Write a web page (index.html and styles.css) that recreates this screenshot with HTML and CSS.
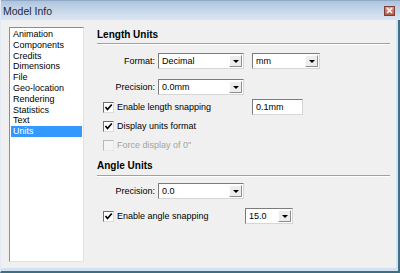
FILE: index.html
```html
<!DOCTYPE html>
<html>
<head>
<meta charset="utf-8">
<link rel="stylesheet" href="styles.css">
</head>
<body>
<div class="window">
  <div class="titlebar">
    <span class="title">Model Info</span>
    <span class="close"><svg width="7" height="7" viewBox="0 0 7 7"><path d="M1 1 L6 6 M6 1 L1 6" stroke="#fff" stroke-width="1.6"/></svg></span>
  </div>
  <div class="client">
    <ul class="list">
      <li>Animation</li>
      <li>Components</li>
      <li>Credits</li>
      <li>Dimensions</li>
      <li>File</li>
      <li>Geo-location</li>
      <li>Rendering</li>
      <li>Statistics</li>
      <li>Text</li>
      <li class="sel">Units</li>
    </ul>
    <div class="panel">
      <div class="heading">Length Units</div>
      <div class="row row-format">
        <span class="lbl">Format:</span>
        <div class="select w-main"><span class="val">Decimal</span><i class="btn"></i></div>
        <div class="select w-unit"><span class="val">mm</span><i class="btn"></i></div>
      </div>
      <div class="row row-prec">
        <span class="lbl">Precision:</span>
        <div class="select w-main"><span class="val">0.0mm</span><i class="btn"></i></div>
      </div>
      <div class="row row-snap">
        <label class="check-label snap-len"><span class="cb on"><svg width="9" height="9" viewBox="0 0 9 9"><path d="M1.5 4 L3.5 6.5 L7.8 1.5" fill="none" stroke="#000" stroke-width="1.7"/></svg></span>Enable length snapping</label>
        <div class="input">0.1mm</div>
      </div>
      <div class="row row-disp">
        <label class="check-label"><span class="cb on"><svg width="9" height="9" viewBox="0 0 9 9"><path d="M1.5 4 L3.5 6.5 L7.8 1.5" fill="none" stroke="#000" stroke-width="1.7"/></svg></span>Display units format</label>
      </div>
      <div class="row row-force">
        <label class="check-label disabled"><span class="cb off"></span>Force display of 0"</label>
      </div>
      <div class="heading heading-angle">Angle Units</div>
      <div class="row row-aprec">
        <span class="lbl">Precision:</span>
        <div class="select w-main"><span class="val">0.0</span><i class="btn"></i></div>
      </div>
      <div class="row row-asnap">
        <label class="check-label snap-ang"><span class="cb on"><svg width="9" height="9" viewBox="0 0 9 9"><path d="M1.5 4 L3.5 6.5 L7.8 1.5" fill="none" stroke="#000" stroke-width="1.7"/></svg></span>Enable angle snapping</label>
        <div class="select w-ang"><span class="val">15.0</span><i class="btn"></i></div>
      </div>
    </div>
  </div>
</div>
</body>
</html>
```
FILE: styles.css
```css
html, body {
  margin: 0;
  padding: 0;
}
body {
  width: 400px;
  height: 273px;
  overflow: hidden;
  font-family: "Liberation Sans", Arial, sans-serif;
  font-size: 9px;
  color: #000;
}
.window {
  width: 400px;
  height: 273px;
  box-sizing: border-box;
  display: flex;
  flex-direction: column;
  background: #d3e2f2;
  border-left: 1px solid #e2ebf5;
  border-right: 2px solid #3f6e80;
  border-bottom: 2px solid #3f6e80;
}
.titlebar {
  height: 20px;
  flex: none;
  display: flex;
  align-items: center;
  justify-content: space-between;
  padding: 0 3px 0 2px;
  margin-right: -2px;
  background: linear-gradient(#aec4dd, #c9d9eb 55%, #dae6f3);
  border-top: 1px solid #8fa9c6;
  box-sizing: border-box;
}
.title {
  font-size: 10.5px;
  color: #1d2a3a;
}
.close {
  width: 11px;
  height: 10px;
  box-sizing: border-box;
  border: 1px solid #7d3f35;
  background: linear-gradient(#d99a8c, #b65a48);
  display: flex;
  align-items: center;
  justify-content: center;
  margin-right: 2px;
}
.client {
  flex: 1;
  margin: 0 2px 3px 0;
  background: #f0f0f0;
  display: flex;
  align-items: flex-start;
}
.list {
  list-style: none;
  margin: 7px 0 0 8px;
  padding: 1px 1px 0 1px;
  width: 75px;
  height: 235px;
  box-sizing: border-box;
  background: #fff;
  border: 1px solid;
  border-color: #8c8c8c #e3e3e3 #e3e3e3 #8c8c8c;
}
.list li {
  line-height: 10.8px;
  height: 10.8px;
  padding-left: 2px;
  white-space: nowrap;
}
.list li.sel {
  background: #3399ff;
  color: #fff;
}
.panel {
  margin-left: 13px;
  width: 293px;
  padding-top: 8px;
}
.heading {
  font-weight: bold;
  font-size: 10px;
  line-height: 13px;
  padding-bottom: 2px;
  border-bottom: 1px solid #a0a0a0;
  box-shadow: 0 1px 0 #fff;
}
.heading-angle {
  margin-top: 7px;
  padding-bottom: 3px;
}
.row {
  display: flex;
  align-items: center;
}
.row-format { margin-top: 9px; }
.row-prec { margin-top: 10px; }
.row-snap { margin-top: 4px; }
.row-disp { margin-top: 4px; height: 14px; }
.row-force { margin-top: 5px; height: 14px; }
.row-aprec { margin-top: 7px; }
.row-asnap { margin-top: 9px; }
.lbl {
  width: 61px;
  box-sizing: border-box;
  padding-right: 3px;
  text-align: right;
}
.select {
  height: 16px;
  box-sizing: border-box;
  display: flex;
  align-items: stretch;
  background: #fff;
  border: 1px solid;
  border-color: #7c7c7c #d6d6d6 #d6d6d6 #7c7c7c;
}
.w-main { width: 86px; }
.w-unit { width: 68px; margin-left: 8px; }
.w-ang { width: 48px; }
.val {
  flex: 1;
  padding-left: 3px;
  line-height: 14px;
  white-space: nowrap;
  overflow: hidden;
}
.btn {
  width: 13px;
  margin: 1px;
  box-sizing: border-box;
  background: #ededed;
  border: 1px solid;
  border-color: #ffffff #8e8e8e #8e8e8e #ffffff;
  display: flex;
  align-items: center;
  justify-content: center;
}
.btn::after {
  content: "";
  border-left: 3px solid transparent;
  border-right: 3px solid transparent;
  border-top: 3px solid #000;
}
.check-label {
  display: flex;
  align-items: center;
  padding-left: 6px;
  white-space: nowrap;
}
.snap-len { width: 155px; box-sizing: border-box; }
.snap-ang { width: 148px; box-sizing: border-box; }
.cb {
  width: 11px;
  height: 11px;
  box-sizing: border-box;
  margin-right: 3px;
  background: #fff;
  border: 1px solid;
  border-color: #6f6f6f #dcdcdc #dcdcdc #6f6f6f;
  display: flex;
  align-items: center;
  justify-content: center;
}
.cb.off {
  border-color: #b9b9b9 #e6e6e6 #e6e6e6 #b9b9b9;
  background: #f4f4f4;
}
.disabled {
  color: #a3a3a3;
}
.input {
  width: 51px;
  height: 16px;
  box-sizing: border-box;
  background: #fff;
  border: 1px solid;
  border-color: #7c7c7c #d6d6d6 #d6d6d6 #7c7c7c;
  padding-left: 3px;
  line-height: 14px;
}
```
